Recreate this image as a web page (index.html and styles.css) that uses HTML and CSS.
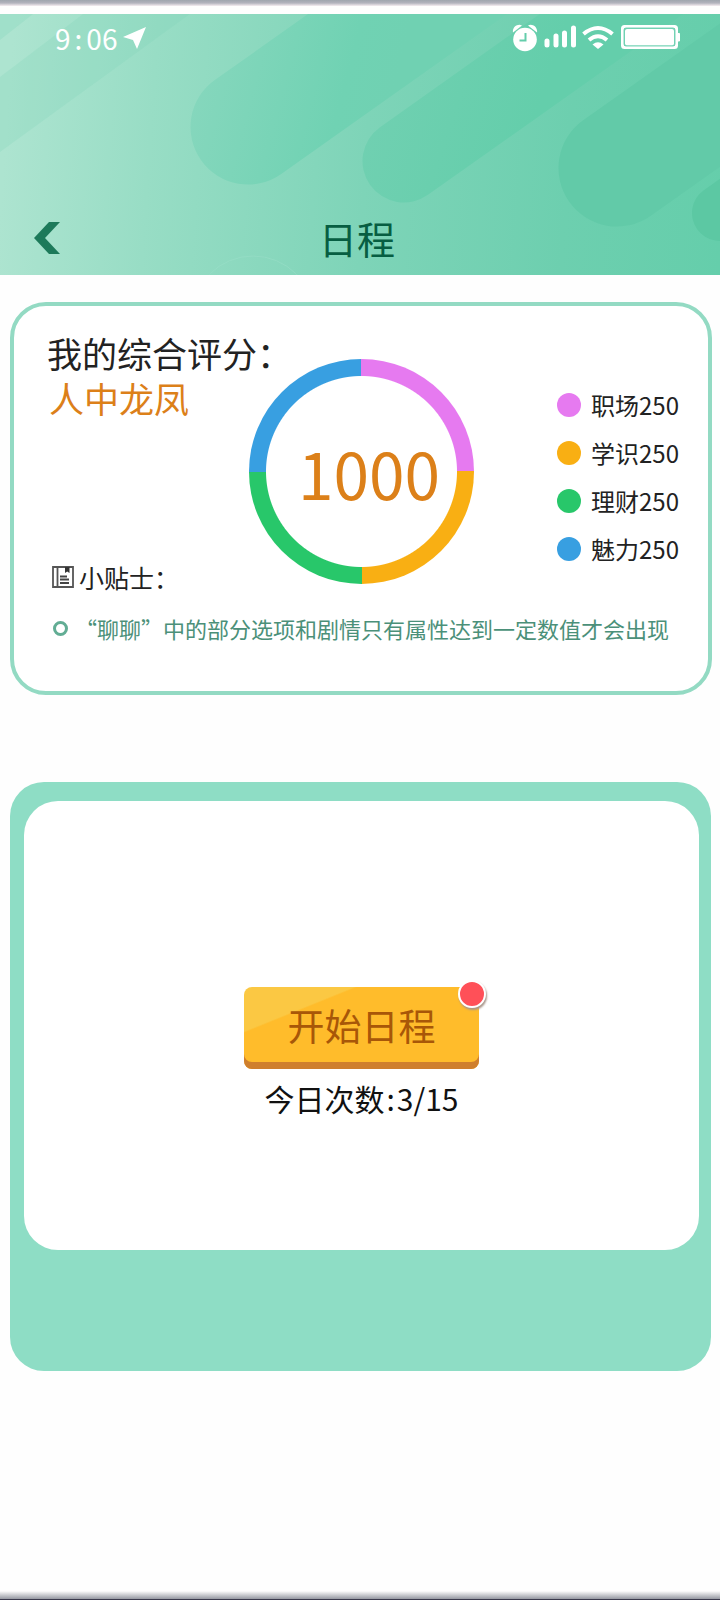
FILE: index.html
```html
<!DOCTYPE html>
<html lang="zh-CN">
<head>
<meta charset="utf-8">
<meta name="viewport" content="width=device-width, initial-scale=1">
<title>日程</title>
<link rel="stylesheet" href="styles.css">
</head>
<body>
<div class="edge edge-top"></div>
<header class="header">
  <svg class="header-art" viewBox="0 0 720 261" preserveAspectRatio="xMidYMid slice" aria-hidden="true">
    <defs>
      <linearGradient id="sky" gradientUnits="userSpaceOnUse" x1="0" y1="200" x2="720" y2="250">
        <stop offset="0" stop-color="#ade4d0"/>
        <stop offset=".2" stop-color="#98ddc5"/>
        <stop offset=".5" stop-color="#7ed4b8"/>
        <stop offset=".78" stop-color="#6dcfaf"/>
        <stop offset="1" stop-color="#65ceab"/>
      </linearGradient>
      <linearGradient id="pillA" gradientUnits="userSpaceOnUse" x1="190" y1="80" x2="380" y2="130">
        <stop offset="0" stop-color="#86d7bd"/>
        <stop offset=".75" stop-color="#70d2b3"/>
        <stop offset="1" stop-color="#70d1b2"/>
      </linearGradient>
      <linearGradient id="pillB" gradientUnits="userSpaceOnUse" x1="370" y1="100" x2="520" y2="150">
        <stop offset="0" stop-color="#70d0b1"/>
        <stop offset="1" stop-color="#64ceab"/>
      </linearGradient>
    </defs>
    <rect width="720" height="261" fill="url(#sky)"/>
    <path d="M0 138 190 0H83L0 63Z" fill="#7dd3b6" opacity=".22"/>
    <path d="M0 26 33 0H0Z" fill="#7dd3b6" opacity=".25"/>
    <g fill="none" stroke-linecap="round">
      <path d="M248 113 738-234" stroke="url(#pillA)" stroke-width="115"/>
      <path d="M404 147 894-200" stroke="url(#pillB)" stroke-width="83"/>
      <path d="M617 154 1107-193" stroke="#62caa8" stroke-width="117"/>
      <path d="M720 199 1210-148" stroke="#5cc8a3" stroke-width="56"/>
    </g>
    <circle cx="253" cy="303" r="61" fill="none" stroke="#9ce0c9" opacity=".5"/>
  </svg>
  <div class="status">
    <div class="status-group">
      <span class="clock">9<span class="clock-colon">:</span>06</span>
      <svg width="24" height="24" viewBox="0 0 24 24" aria-hidden="true"><path d="M23 1 0 11 10 14 14 23Z" fill="#fff"/></svg>
    </div>
    <div class="status-group status-icons">
      <svg width="26" height="28" viewBox="0 0 26 28" aria-hidden="true">
        <circle cx="13" cy="15.500" r="11.800" fill="#fff"/>
        <path d="M1 8.500C0 3 6-1 10 1.500ZM25 8.500C26 3 20-1 16 1.500Z" fill="#fff"/>
        <path d="M13.500 9V16.500H7.500" fill="none" stroke="#64cdab" stroke-width="2"/>
      </svg>
      <svg width="32" height="28" viewBox="0 0 32 28" aria-hidden="true">
        <path d="M3 21V17M12 21V12M20.500 21V9M29.500 21V4" stroke="#fff" stroke-width="5" stroke-linecap="round"/>
      </svg>
      <svg width="32" height="28" viewBox="0 0 32 28" aria-hidden="true">
        <path d="M1.500 10Q16-2 30.500 10M7 16Q16 8.500 25 16" fill="none" stroke="#fff" stroke-width="4"/>
        <path d="M10.500 20.500Q16 16 21.500 20.500L16 25Z" fill="#fff"/>
      </svg>
      <svg width="60" height="28" viewBox="0 0 60 28" aria-hidden="true">
        <rect x="2.500" y="2.500" width="54" height="21" rx="2" fill="none" stroke="#fff" stroke-width="3"/>
        <rect x="5" y="5" width="49" height="16.500" rx="2" fill="#fff"/>
        <path d="M57.500 9.500H59.500V17H57.500Z" fill="#fff" stroke="#fff"/>
        <rect x="4" y="4" width="51" height="18" rx="2" fill="none" stroke="#7dd5ba"/>
      </svg>
    </div>
  </div>
  <div class="nav">
    <button class="back" type="button" aria-label="返回">
      <svg width="26" height="34" viewBox="0 0 26 34" aria-hidden="true"><path d="M15 1H26L11 17 26 33H15L0 17Z" fill="#1d7a5a"/></svg>
    </button>
    <h1 class="title">日程</h1>
  </div>
</header>

<main class="main">
  <section class="card">
    <div class="score">
      <div class="score-text">
        <h2 class="score-heading">我的综合评分：</h2>
        <p class="rank">人中龙凤</p>
        <h3 class="tips-heading">
          <svg width="22" height="22" viewBox="0 0 22 22" aria-hidden="true">
            <path d="M1 1H21V21H1ZM5.500 1V21" fill="none" stroke="#555" stroke-width="1.800"/>
            <path d="M13 1H17.500V7L15.200 5.500 13 7Z" fill="#333"/>
            <path d="M8 10.500H15M8 13.500H17M8 17H17" stroke="#444" stroke-width="1.800"/>
          </svg>
          <span>小贴士：</span>
        </h3>
      </div>
      <div class="donut"><span class="total">1000</span></div>
      <ul class="legend">
        <li class="legend-item"><span class="dot dot-career"></span>职场250</li>
        <li class="legend-item"><span class="dot dot-study"></span>学识250</li>
        <li class="legend-item"><span class="dot dot-money"></span>理财250</li>
        <li class="legend-item"><span class="dot dot-charm"></span>魅力250</li>
      </ul>
    </div>
    <ul class="tips">
      <li class="tip"><span class="ring"></span><span>“聊聊”中的部分选项和剧情只有属性达到一定数值才会出现</span></li>
    </ul>
  </section>

  <section class="panel">
    <div class="panel-inner">
      <button class="start" type="button">开始日程<span class="badge"></span></button>
      <p class="count">今日次数<span class="count-colon">:</span>3/15</p>
    </div>
  </section>
</main>
<div class="edge edge-bottom"></div>
</body>
</html>
```
FILE: styles.css
```css
* {
  box-sizing: border-box;
}

body {
  display: flex;
  flex-direction: column;
  min-height: 100vh;
  margin: 0;
  background: #fefefe;
  color: #222;
  font-family: "Noto Sans CJK SC", sans-serif;
}

h1, h2, h3, p, ul {
  margin: 0;
  padding: 0;
  font-weight: 400;
  list-style: none;
}

button {
  padding: 0;
  border: 0;
  background: none;
  font: inherit;
  cursor: pointer;
}

svg {
  display: block;
  flex: none;
}

.edge-top {
  height: 6px;
  margin-bottom: 8px;
  background: linear-gradient(#9fa5ae, #b3b3bd 50%, #f6eef2);
}

.edge-bottom {
  height: 9px;
  margin-top: auto;
  background: linear-gradient(#fefefe, #9a9da6 85%, #3a3a4c 90%);
}

.header {
  position: relative;
  padding: 10px 40px 11px 34px;
}

.header-art {
  position: absolute;
  inset: 0;
  width: 100%;
  height: 100%;
}

.status {
  position: relative;
  display: flex;
  justify-content: space-between;
  height: 28px;
  padding-left: 21px;
}

.status-group {
  display: flex;
  align-items: center;
  gap: 6px;
}

.status-icons {
  gap: 6px;
}

.clock {
  color: #fff;
  font-size: 28px;
  line-height: 28px;
}

.clock-colon {
  margin: 0 4px;
}

.nav {
  position: relative;
  display: grid;
  grid-template-columns: 34px 1fr 34px;
  align-items: center;
  margin-top: 160px;
}

.back {
  color: #1d7a5a;
}

.title {
  color: #075e42;
  font-size: 38px;
  line-height: 52px;
  text-align: center;
}

.main {
  padding: 27px 8px 0 10px;
}

.card {
  padding: 24px 29px 48px 33px;
  border: 4px solid #93dac3;
  border-radius: 36px;
  background: #fff;
}

.score {
  display: grid;
  grid-template-columns: 1fr auto 1fr;
}

.score-text {
  white-space: nowrap;
  min-width: 0;
}

.score-heading,
.rank {
  font-size: 35px;
  line-height: 45px;
}

.rank {
  padding-left: 2px;
  color: #dc8019;
}

.tips-heading {
  display: flex;
  align-items: center;
  gap: 5px;
  margin-top: 142px;
  padding-left: 5px;
  font-size: 25px;
  line-height: 30px;
}

.donut {
  display: grid;
  place-items: center;
  width: 225px;
  height: 225px;
  margin-top: 29px;
  margin-right: 4px;
  border-radius: 50%;
  background:
    radial-gradient(circle, #fff 95px, transparent 96px),
    conic-gradient(#e67af0 25%, #f9af13 0 50%, #28c76a 0 75%, #389fe1 0);
}

.total {
  padding-left: 16px;
  color: #dc8019;
  font-size: 64px;
  line-height: 70px;
}

.legend {
  display: flex;
  flex-direction: column;
  align-items: flex-end;
  gap: 24px;
  margin-top: 63px;
}

.legend-item {
  display: flex;
  align-items: center;
  gap: 10px;
  font-size: 24px;
  line-height: 24px;
}

.dot {
  width: 24px;
  height: 24px;
  border-radius: 50%;
}

.dot-career { background: #e67af0; }
.dot-study { background: #f9af13; }
.dot-money { background: #28c76a; }
.dot-charm { background: #389fe1; }

.tips {
  margin-top: 21px;
  padding-left: 6px;
}

.tip {
  display: flex;
  align-items: center;
  gap: 7px;
  color: #4b9079;
  font-size: 22px;
  line-height: 30px;
  white-space: nowrap;
}

.ring {
  width: 15px;
  height: 15px;
  border: 3px solid #62ad94;
  border-radius: 50%;
}

.panel {
  margin: 87px 1px 0 0;
  padding: 19px 12px 121px 14px;
  border-radius: 34px;
  background: #8eddc5;
}

.panel-inner {
  display: flex;
  flex-direction: column;
  align-items: center;
  gap: 9px;
  padding: 186px 0 132px;
  border-radius: 34px;
  background: #fff;
}

.start {
  position: relative;
  width: 235px;
  height: 82px;
  padding-bottom: 6px;
  border-radius: 8px;
  background: linear-gradient(158deg, #fbc843 25%, #ffbc2b 26%);
  box-shadow: inset 0 -7px #cf7f2d;
  color: #a85708;
  font-size: 37px;
  line-height: 74px;
}

.badge {
  position: absolute;
  top: -7px;
  right: -7px;
  width: 28px;
  height: 28px;
  border: 2px solid #fff;
  border-radius: 50%;
  background: #ff5058;
  box-shadow: 1px 2px 2px #a9968a;
}

.count {
  color: #111;
  font-size: 30px;
  line-height: 40px;
}

.count-colon {
  margin: 0 2px;
}
```
